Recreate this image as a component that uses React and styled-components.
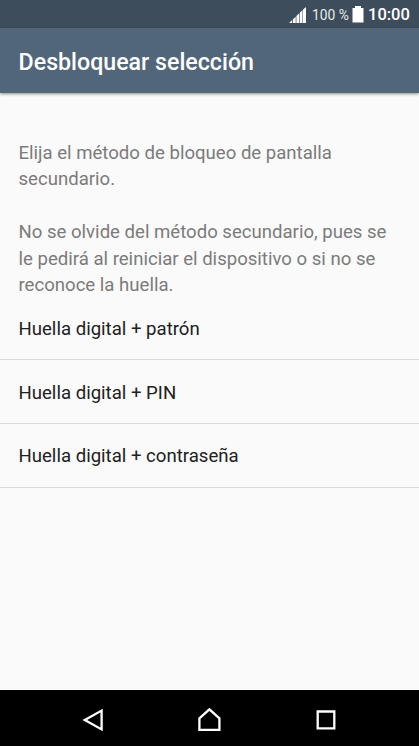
import React from "react";
import styled, { createGlobalStyle } from "styled-components";

const GlobalStyle = createGlobalStyle`
  * {
    box-sizing: border-box;
  }

  body {
    margin: 0;
    background: #fafafa;
    font-family: Roboto, "Liberation Sans", sans-serif;
  }
`;

// Styled components
const Screen = styled.div`
  display: flex;
  flex-direction: column;
  width: 100%;
  height: 100vh;
  overflow: hidden;
  background: #fafafa;
`;

const StatusBar = styled.div`
  display: flex;
  align-items: center;
  justify-content: flex-end;
  flex: none;
  height: 28px;
  padding: 1px 9px 0 0;
  background: #3e4d5b;
  color: #fff;
`;

const SignalIcon = styled.svg`
  flex: none;
  width: 18px;
  height: 18px;
  margin-right: 5px;
`;

const BatteryLevel = styled.span`
  width: 39px;
  font-size: 13.8px;
  line-height: 28px;
  color: #e9ecee;
  white-space: nowrap;
`;

const BatteryIcon = styled.svg`
  flex: none;
  width: 12px;
  height: 18px;
  margin: 0 4px 2px 1px;
`;

const Clock = styled.span`
  width: 42px;
  font-size: 16.5px;
  font-weight: 500;
  line-height: 28px;
  white-space: nowrap;
`;

const AppBar = styled.header`
  display: flex;
  align-items: center;
  flex: none;
  height: 65px;
  padding: 3px 18.6px 0;
  background: #516679;
  box-shadow: 0 1px 3px rgba(0, 0, 0, 0.45);
`;

const Title = styled.h1`
  margin: 0;
  font-size: 23.2px;
  font-weight: 500;
  line-height: 28px;
  color: #fff;
  white-space: nowrap;
`;

const Content = styled.main`
  flex: 1;
  padding-top: 47px;
`;

const Description = styled.p`
  margin: 0 0 26.4px;
  padding: 0 18.5px;
  font-size: 18.58px;
  line-height: 26.4px;
  color: #7b7b7b;
  white-space: nowrap;

  &:last-of-type {
    margin-bottom: 0;
  }
`;

const OptionList = styled.ul`
  margin: -2px 0 0;
  padding: 0;
  list-style: none;
`;

const Option = styled.li`
  display: flex;
  align-items: center;
  height: 63.8px;
  padding: 2px 18.5px 0;
  border-bottom: 1px solid #dadada;
  font-size: 18.6px;
  color: #212121;
`;

const NavBar = styled.nav`
  flex: none;
  height: 56px;
  background: #000;
`;

const NavIcons = styled.svg`
  display: block;
  width: 419px;
  height: 56px;
  fill: none;
  stroke: #fff;
  stroke-width: 2.3;
`;

const options = [
  "Huella digital + patrón",
  "Huella digital + PIN",
  "Huella digital + contraseña",
];

// UnlockSelection component
export default function UnlockSelection() {
  return (
    <>
      <GlobalStyle />
      <Screen>
        <StatusBar>
          <SignalIcon viewBox="0 0 18 18" fill="#fff">
            <path d="M0 17L3 14.3V17ZM3.8 13.4L6.7 10.7V17H3.8ZM7.4 9.9L10.3 7.2V17H7.4ZM10.9 6.5L13.4 4.2V17H10.9ZM13.9 3.7L17 1V17H13.9Z" />
          </SignalIcon>
          <BatteryLevel>100 %</BatteryLevel>
          <BatteryIcon viewBox="0 0 12 18" fill="#fff">
            <path d="M3 1H9V3H11.5V17.5H0.5V3H3Z" />
          </BatteryIcon>
          <Clock>10:00</Clock>
        </StatusBar>
        <AppBar>
          <Title>Desbloquear selección</Title>
        </AppBar>
        <Content>
          <Description>
            Elija el método de bloqueo de pantalla
            <br />
            secundario.
          </Description>
          <Description>
            No se olvide del método secundario, pues se
            <br />
            le pedirá al reiniciar el dispositivo o si no se
            <br />
            reconoce la huella.
          </Description>
          <OptionList>
            {options.map((option) => (
              <Option key={option}>{option}</Option>
            ))}
          </OptionList>
        </Content>
        <NavBar>
          <NavIcons viewBox="0 0 419 56">
            <path d="M84.8 30L101.6 20.6V39.4Z" />
            <path d="M199.4 28.3L209.4 19.4L219.4 28.3V39.8H199.4Z" />
            <path d="M317.7 21.5H334.3V38.3H317.7Z" />
          </NavIcons>
        </NavBar>
      </Screen>
    </>
  );
}
